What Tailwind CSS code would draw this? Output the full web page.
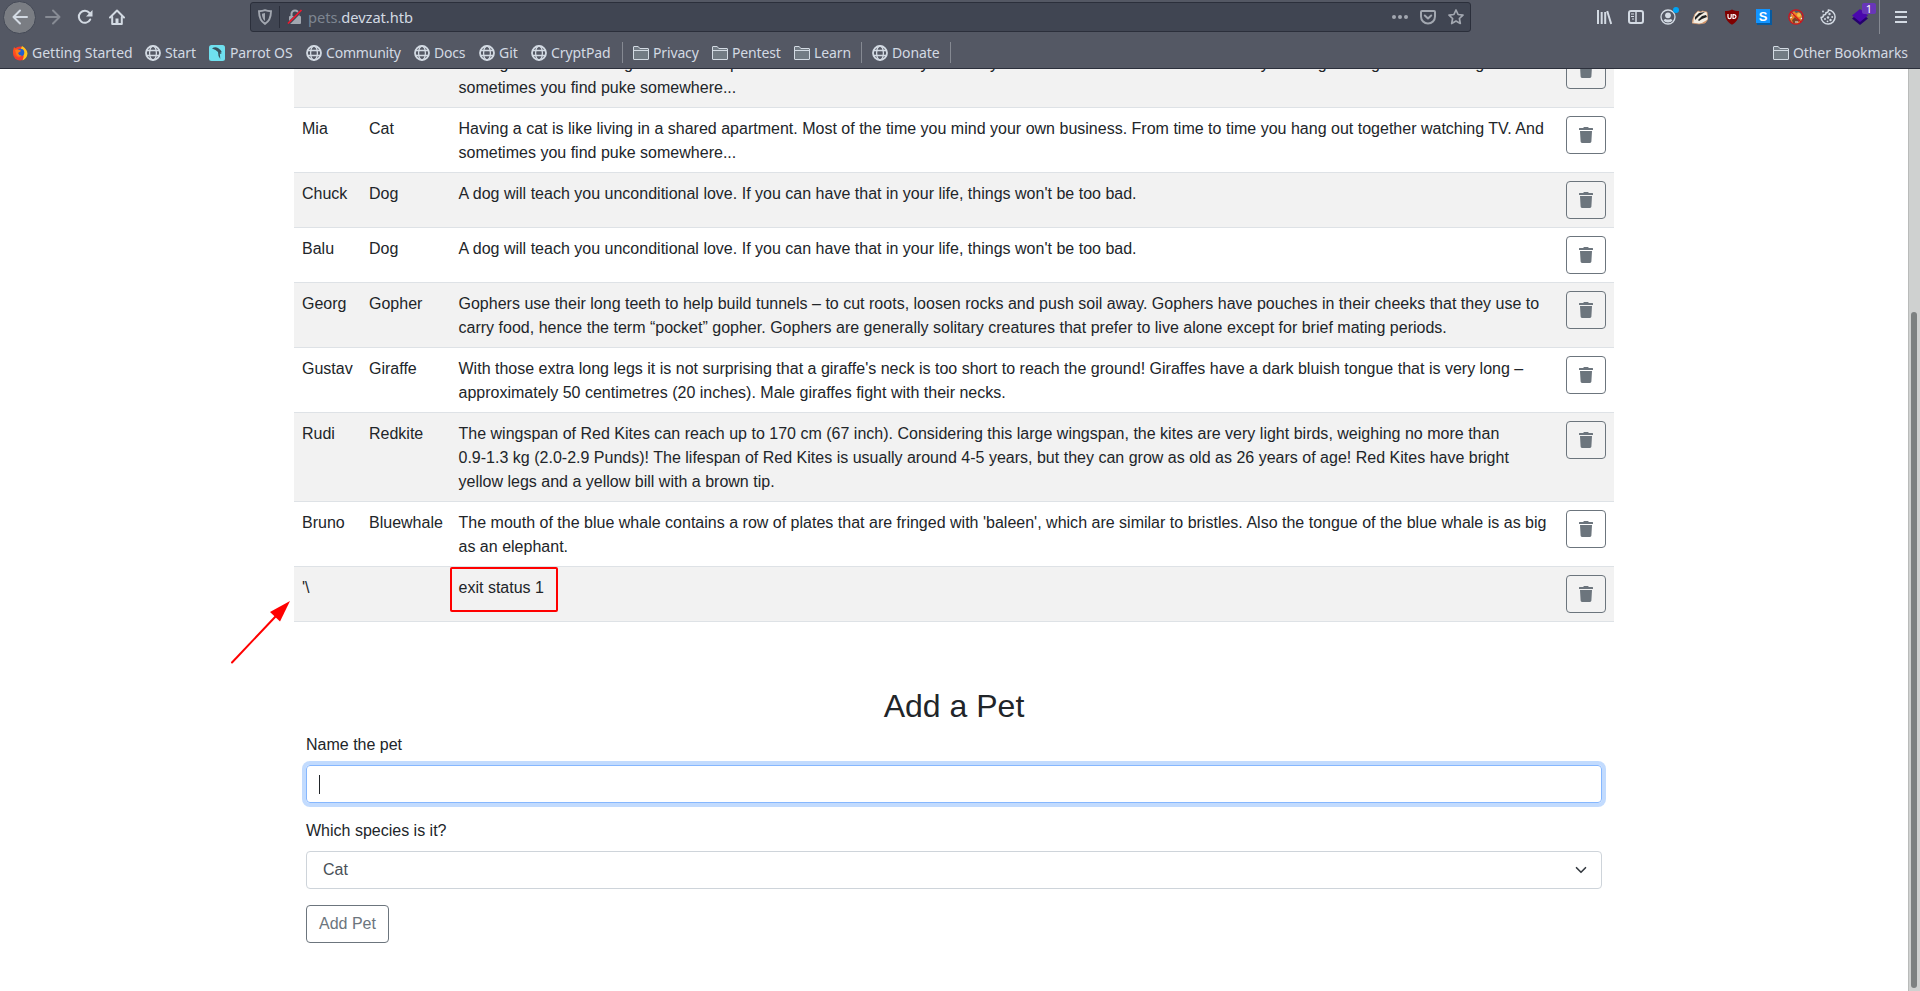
<!DOCTYPE html>
<html lang="en">
<head>
<meta charset="utf-8">
<title>pets.devzat.htb</title>
<script src="https://cdn.jsdelivr.net/npm/@tailwindcss/browser@4"></script>
</head>
<body class="bg-white">
<svg class="hidden">
  <symbol id="globe" viewBox="0 0 16 16"><g fill="none" stroke="currentColor"><circle cx="8" cy="8" r="7" stroke-width="1.8"/><ellipse cx="8" cy="8" rx="3.4" ry="7" stroke-width="1.3"/><path d="M1.600 5.500h12.800M1.600 10.500h12.800" stroke-width="1.3"/></g></symbol>
  <symbol id="folder" viewBox="0 0 16 14"><path d="M.5 13V1q0-.5.5-.5h4.200L6.800 2.500H15q.5 0 .5.5v10q0 .5-.5.5H1q-.5 0-.5-.5z" fill="#727b84" stroke="currentColor"/><path d="M.5 4.500h15" stroke="currentColor"/></symbol>
  <symbol id="trash" viewBox="0 0 14 16"><path d="M.5 1h3.600l.9-.9h4l.9.9h3.600q.5 0 .5.5V3H0V1.500Q0 1 .5 1zM1 4h12l-.6 10.600Q12.300 16 11 16H3q-1.300 0-1.400-1.400z" fill="currentColor"/></symbol>
</svg>
<div class="relative flex h-[991px] w-[1920px] flex-col overflow-hidden font-['Liberation_Sans',sans-serif] text-base text-[#212529]">
  <header class="z-10 h-[69px] shrink-0 border-b border-[#2b2f3b] bg-[#545864] font-['Noto_Sans',sans-serif] text-[#d3dae3]">
    <div class="flex h-[34px] items-center">
      <div class="ml-[3px] flex size-[33px] items-center justify-center rounded-full border border-[#444956] bg-[#7a7d83]">
        <svg class="size-4" viewBox="0 0 16 16" fill="none" stroke="currentColor" stroke-width="2" stroke-linecap="round" stroke-linejoin="round"><path d="M15 8H1.500M8 1.500L1.500 8L8 14.500"/></svg>
      </div>
      <svg class="ml-[9px] size-4 text-[#878b94]" viewBox="0 0 16 16" fill="none" stroke="currentColor" stroke-width="2" stroke-linecap="round" stroke-linejoin="round"><path d="M1 8h13.500M8 1.500L14.500 8L8 14.500"/></svg>
      <svg class="ml-4 size-4" viewBox="0 0 16 16" fill="none" stroke="currentColor" stroke-width="2" stroke-linecap="round"><path d="M13.200 10.500A6 6 0 1 1 12.500 4"/><path d="M15.500 1v6.500H9z" fill="currentColor" stroke="none"/></svg>
      <svg class="ml-4 size-4" viewBox="0 0 16 16" fill="none" stroke="currentColor" stroke-width="2" stroke-linejoin="round" stroke-linecap="round"><path d="M1 8.500L8 1.500l7 7"/><path d="M3.200 8v7h9.600V8"/><path d="M6.500 9.500h3V15h-3z" fill="currentColor" stroke="none"/></svg>
      <div class="ml-[125px] mt-0 flex h-[30px] w-[1221px] items-center rounded-[3px] border border-[#2b2f3b] bg-[#404552]">
        <svg class="ml-[6px] size-4 text-[#a2a7b0]" viewBox="0 0 16 16"><path d="M8 1.200c2 .8 4 1 6 1-.1 6-1.400 10-6 12.600C3.400 12.200 2.100 8.200 2 2.200c2 0 4-.2 6-1z" fill="none" stroke="currentColor" stroke-width="1.900"/><path d="M8 4v8c-2-1.500-3-4-3.100-7.300z" fill="currentColor"/></svg>
        <div class="ml-[6px] h-[22px] w-px bg-[#2b2f3b]"></div>
        <svg class="ml-[7px] size-4" viewBox="0 0 16 16"><rect x="2" y="7" width="12" height="8" rx="1" fill="#a2a7b0"/><path d="M4.500 7V5a3.500 3.500 0 0 1 7 0v2" stroke="#a2a7b0" stroke-width="2" fill="none"/><path d="M1 15L14.500 1.500" stroke="#404552" stroke-width="3"/><path d="M1 14.500L14.500 1" stroke="#f0182d" stroke-width="1.700"/></svg>
        <div class="ml-[5px] text-[14.667px] leading-5 -tracking-[0.05px]"><span class="text-[#7e8591]">pets.</span>devzat.htb</div>
        <svg class="ml-auto h-4 w-4 text-[#a2a7b0]" viewBox="0 0 16 16" fill="currentColor"><circle cx="2" cy="8" r="2"/><circle cx="8" cy="8" r="2"/><circle cx="14" cy="8" r="2"/></svg>
        <svg class="ml-3 size-4 text-[#a2a7b0]" viewBox="0 0 16 16" fill="none" stroke="currentColor" stroke-width="2" stroke-linecap="round" stroke-linejoin="round"><path d="M2 2h12q1 0 1 1v4.500a7 7 0 0 1-14 0V3q0-1 1-1z"/><path d="M4.800 6.500L8 9.500l3.200-3"/></svg>
        <svg class="ml-3 mr-[6px] size-4 text-[#a2a7b0]" viewBox="0 0 16 16" fill="none" stroke="currentColor" stroke-width="1.700" stroke-linejoin="round"><path d="M8 1l2.100 4.500 4.900.6-3.600 3.400.9 5L8 12.100 3.700 14.500l.9-5L1 6.100l4.900-.6z"/></svg>
      </div>
      <svg class="ml-[125px] size-4" viewBox="0 0 16 16" stroke="currentColor" stroke-width="2" fill="none"><path d="M2 1v14M5.700 3v12M9.200 3v12M11.200 2l4 13"/></svg>
      <svg class="ml-4 size-4" viewBox="0 0 16 16" fill="none" stroke="currentColor"><rect x="1" y="2" width="14" height="12" rx="2" stroke-width="2"/><path d="M8 2v12" stroke-width="1.500"/><path d="M3 5h3M3 7.500h3M4 10h2"/></svg>
      <div class="relative ml-4 size-4">
        <svg class="size-4" viewBox="0 0 16 16"><circle cx="8" cy="8" r="7" fill="none" stroke="currentColor" stroke-width="1.300"/><circle cx="8" cy="6.300" r="2.900" fill="currentColor"/><path d="M3.500 11.500q.5-1.500 2-1.500 2.500 1 5 0 1.500 0 2 1.500Q11 13.500 8 13.500t-4.500-2z" fill="currentColor"/></svg>
        <div class="absolute -right-[3px] -top-[2px] size-[6px] rounded-full bg-[#00a4f5]"></div>
      </div>
      <svg class="ml-4 size-4" viewBox="0 0 16 16"><path d="M0 14l1-4 2-5 3-3 3 1 1-1 5 1 1 7-3 4-6 1z" fill="#f3eee4" stroke="#d79262" stroke-width=".7"/><path d="M3 8l4-4 6-1-6 4-4 4zM6 11l4-4 4-1 1 2-5 2-3 2z" fill="#222"/><path d="M1 12l2-5-2 7zM10 14l5-3-2 3z" fill="#d79262"/></svg>
      <svg class="ml-4 size-4" viewBox="0 0 16 16"><path d="M8 .5c2 1 4.500 1.500 7 1.500 0 6-1 10.500-7 13.700C2 12.500 1 8 1 2 3.500 2 6 1.500 8 .5z" fill="#800000"/><path d="M4 5v3q0 1.700 1.600 1.700T7.200 8V5M9 5.700h1q2 .2 2 1.900t-2 1.900H9z" fill="none" stroke="#fff" stroke-width="1.200"/></svg>
      <div class="relative ml-4 size-4"><div class="absolute left-px top-px size-[15px] bg-[#075a9f]"></div><div class="absolute left-0 top-0 flex size-[14px] items-center justify-center bg-[#1294ff] font-['Liberation_Sans',sans-serif] text-[13px] font-bold leading-none text-white">S</div></div>
      <svg class="ml-4 size-4" viewBox="0 0 16 16"><path d="M3 5l3-3 2 2 3-1 3 4-1 6-4 2-5-1-2-4z" fill="#e98326"/><path d="M4 11l3-3 2 2 3 1-3 3-4 0z" fill="#7b4426"/><circle cx="11" cy="6" r="2" fill="#f4bf4f"/><path d="M2 9l2-1M4 4l1 2M7 13h3M13 9l1 1" stroke="#eee" stroke-width="1.200"/><circle cx="8" cy="8" r="7.200" fill="none" stroke="#d3131c" stroke-width="1.200"/><path d="M3 3l10 10" stroke="#d3131c" stroke-width="1.200"/></svg>
      <svg class="ml-4 size-4" viewBox="0 0 16 16"><path d="M8.500 1a7 7 0 1 1-7.400 7.500q2.400 0 2.400-2.500 2.500 0 2.500-2.300Q8.500 3.500 8.500 1z" fill="none" stroke="currentColor" stroke-width="1.500"/><g fill="currentColor"><circle cx="9.500" cy="5" r="1.200"/><circle cx="12.200" cy="8" r="1"/><circle cx="8" cy="8.500" r="1.200"/><circle cx="5" cy="10" r="1"/><circle cx="10.500" cy="11" r="1.200"/><circle cx="7.500" cy="12.300" r=".9"/><circle cx="3" cy="2.500" r=".9"/></g></svg>
      <div class="relative ml-4 size-4">
        <svg class="size-4 overflow-visible" viewBox="0 0 16 16"><path d="M8 3l8 6.500L8 16 0 9.500z" fill="#25006d"/><path d="M8 0l8 6.500L8 13 0 6.500z" fill="#4a07ad"/></svg>
        <div class="absolute -right-2 top-[-6px] flex h-[11px] w-[14px] items-center justify-center rounded-[2px] bg-[#6836b8] text-[11px] leading-none text-white">1</div>
      </div>
      <div class="ml-[11px] h-[34px] w-px bg-[#858992]"></div>
      <svg class="ml-[15px] h-4 w-3" viewBox="0 0 12 16" stroke="currentColor" stroke-width="2"><path d="M0 3h12M0 8h12M0 13h12"/></svg>
    </div>
    <div class="flex h-[34px] items-center whitespace-nowrap pl-3 pt-[3px] text-[14px] leading-5">
      <svg class="size-4 shrink-0" viewBox="0 0 16 16"><circle cx="8" cy="8.500" r="7" fill="#f63b2e"/><path d="M10 1q5 3 5.500 7.500-.5 5-5 7Q14 8 8 6z" fill="#ffc21c"/><path d="M2 2q1 2 4 2l3 2-3 2q1 3 4 2-2 4-5.500 2Q1 10 1 6z" fill="#ff4f1f"/><circle cx="8.500" cy="7.500" r="3.800" fill="#225fce"/><path d="M3 5q3-1 5 0l1 1-3 2q1 3 4 2.500Q7 13 4.500 10z" fill="#ff7b1a"/></svg><span class="ml-1 w-[101px]">Getting Started</span>
      <svg class="ml-3 size-4"><use href="#globe"/></svg><span class="ml-1 w-8 -tracking-[0.1px]">Start</span>
      <svg class="ml-3 size-4" viewBox="0 0 16 16"><rect width="16" height="16" rx="2.500" fill="#6fe0ef"/><path d="M3 3.500Q6 1.500 9 3q3 1.500 4 4.500l-1.500-.5 1 2-1.700-.5.500 5.500-1.800-3-.5-4Q7 4.500 3 3.500z" fill="#39515c"/></svg><span class="ml-[5px] w-16 -tracking-[0.1px]">Parrot OS</span>
      <svg class="ml-3 size-4"><use href="#globe"/></svg><span class="ml-1 w-[76px] -tracking-[0.2px]">Community</span>
      <svg class="ml-3 size-4"><use href="#globe"/></svg><span class="ml-1 w-[33px] -tracking-[0.2px]">Docs</span>
      <svg class="ml-3 size-4"><use href="#globe"/></svg><span class="ml-1 w-5">Git</span>
      <svg class="ml-3 size-4"><use href="#globe"/></svg><span class="ml-1 w-[60px] -tracking-[0.1px]">CryptPad</span>
      <div class="ml-[11px] h-[21px] w-px bg-[#858992]"></div>
      <svg class="ml-[10px] h-[14px] w-4"><use href="#folder"/></svg><span class="ml-1 w-[47px] -tracking-[0.15px]">Privacy</span>
      <svg class="ml-3 h-[14px] w-4"><use href="#folder"/></svg><span class="ml-1 w-[50px] -tracking-[0.15px]">Pentest</span>
      <svg class="ml-3 h-[14px] w-4"><use href="#folder"/></svg><span class="ml-1 w-9 -tracking-[0.1px]">Learn</span>
      <div class="ml-[11px] h-[21px] w-px bg-[#858992]"></div>
      <svg class="ml-[10px] size-4"><use href="#globe"/></svg><span class="ml-1 w-[47px] -tracking-[0.1px]">Donate</span>
      <div class="ml-[11px] h-[21px] w-px bg-[#858992]"></div>
      <svg class="ml-auto h-[14px] w-4"><use href="#folder"/></svg><span class="ml-1 mr-3 w-[115px] -tracking-[0.1px]">Other Bookmarks</span>
    </div>
  </header>
  <div class="flex min-h-0 flex-1">
    <main class="flex-1 overflow-hidden">
      <div class="-mt-[26px] ml-[294px] w-[1320px]">
        <div id="rows"></div>
        <form class="px-3 pt-[65px]">
          <h2 class="mb-2 text-center text-[32px] leading-[38.400px]">Add a Pet</h2>
          <label class="mb-2 block leading-6">Name the pet</label>
          <div class="flex h-[38px] items-center rounded border border-[#86b7fe] pl-3 shadow-[0_0_0_4px_rgba(13,110,253,0.25)]"><div class="h-[19px] w-px bg-[#212529]"></div></div>
          <label class="mb-2 mt-4 block leading-6">Which species is it?</label>
          <div class="flex h-[38px] items-center justify-between rounded border border-[#ced4da] pl-4 pr-[14px] text-[#495057]">Cat
            <svg class="h-3 w-3" viewBox="0 0 16 16" fill="none" stroke="#343a40" stroke-width="2.200" stroke-linecap="round" stroke-linejoin="round"><path d="M2 5l6 6 6-6"/></svg>
          </div>
          <button type="button" class="mt-4 h-[38px] w-[83px] rounded border border-[#6c757d] text-center text-[#6c757d]">Add Pet</button>
        </form>
      </div>
    </main>
    <div class="flex w-3 flex-col border-l border-[#b9bbba] bg-[#cfd1d0] pb-[3px] pl-[2px] pt-[243px]"><div class="w-[6px] flex-1 rounded-full bg-[#7d8181]"></div></div>
  </div>
  <div class="absolute left-[450px] top-[567px] h-[45px] w-[108px] rounded-[2px] border-2 border-[#f00]"></div>
  <svg class="absolute left-[228px] top-[598px] h-[68px] w-[66px]" viewBox="0 0 66 68"><path d="M4 64.500L48 18" stroke="#f00" stroke-width="2" stroke-linecap="round"/><path d="M62 3L42 14l10 9.500z" fill="#f00"/></svg>
</div>
<template id="row">
  <div class="flex border-b border-[#dee2e6] py-2 odd:bg-[#f2f2f2]">
    <div class="-mb-px w-[67px] shrink-0 pl-2 pt-px"></div>
    <div class="-mb-px w-[89.500px] shrink-0 pl-2 pt-px"></div>
    <div class="-mb-px w-[1115.500px] shrink-0 whitespace-pre pl-2 pt-px leading-6 tracking-[0.008px]"></div>
    <div class="flex h-[38px] w-10 shrink-0 items-center justify-center rounded border border-[#6c757d] text-[#6c757d]"><svg class="h-4 w-[14px]"><use href="#trash"/></svg></div>
  </div>
</template>
<script>
const cat = "Having a cat is like living in a shared apartment. Most of the time you mind your own business. From time to time you hang out together watching TV. And\nsometimes you find puke somewhere...";
const dog = "A dog will teach you unconditional love. If you can have that in your life, things won't be too bad.";
const pets = [
  ["", "", cat],
  ["Mia", "Cat", cat],
  ["Chuck", "Dog", dog],
  ["Balu", "Dog", dog],
  ["Georg", "Gopher", "Gophers use their long teeth to help build tunnels – to cut roots, loosen rocks and push soil away. Gophers have pouches in their cheeks that they use to\ncarry food, hence the term “pocket” gopher. Gophers are generally solitary creatures that prefer to live alone except for brief mating periods."],
  ["Gustav", "Giraffe", "With those extra long legs it is not surprising that a giraffe's neck is too short to reach the ground! Giraffes have a dark bluish tongue that is very long –\napproximately 50 centimetres (20 inches). Male giraffes fight with their necks."],
  ["Rudi", "Redkite", "The wingspan of Red Kites can reach up to 170 cm (67 inch). Considering this large wingspan, the kites are very light birds, weighing no more than\n0.9-1.3 kg (2.0-2.9 Punds)! The lifespan of Red Kites is usually around 4-5 years, but they can grow as old as 26 years of age! Red Kites have bright\nyellow legs and a yellow bill with a brown tip."],
  ["Bruno", "Bluewhale", "The mouth of the blue whale contains a row of plates that are fringed with 'baleen', which are similar to bristles. Also the tongue of the blue whale is as big\nas an elephant."],
  ["'\\", "", "exit status 1"]
];
const rows = document.getElementById("rows");
pets.forEach((pet) => {
  const node = document.getElementById("row").content.cloneNode(true);
  const cells = node.firstElementChild.children;
  pet.forEach((text, c) => { cells[c].textContent = text; });
  rows.append(node);
});
</script>
</body>
</html>
